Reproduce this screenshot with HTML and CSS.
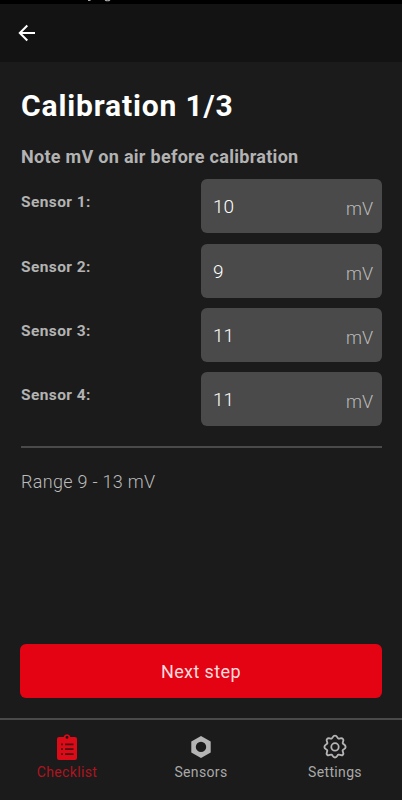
FILE: index.html
```html
<!DOCTYPE html>
<html lang="en">
<head>
<meta charset="utf-8">
<title>Calibration</title>
<link rel="stylesheet" href="styles.css">
</head>
<body>
<div class="screen">
  <div class="statusbar"><svg width="402" height="4" viewBox="0 0 402 4" fill="none" stroke="#a8a8a8" stroke-width="1.2"><path d="M88 .3h2.500M105 .2q3 1.200 5-.2"/></svg></div>
  <header class="appbar">
    <svg class="back" width="18" height="18" viewBox="0 0 18 18" fill="none" stroke="#fff" stroke-width="2"><path d="M17 9H2.200M9.300 1.500 1.800 9l7.500 7.500"/></svg>
  </header>
  <main class="content">
    <h1 class="title">Calibration 1/3</h1>
    <h2 class="subtitle">Note mV on air before calibration</h2>
    <div class="sensors">
      <div class="row"><span class="label">Sensor 1:</span><div class="field"><span class="value">10</span><span class="unit">mV</span></div></div>
      <div class="row"><span class="label">Sensor 2:</span><div class="field"><span class="value">9</span><span class="unit">mV</span></div></div>
      <div class="row"><span class="label">Sensor 3:</span><div class="field"><span class="value">11</span><span class="unit">mV</span></div></div>
      <div class="row"><span class="label">Sensor 4:</span><div class="field"><span class="value">11</span><span class="unit">mV</span></div></div>
    </div>
    <hr class="divider">
    <p class="range">Range 9 - 13 mV</p>
    <button class="next"><span>Next step</span></button>
  </main>
  <nav class="tabs">
    <a class="tab active">
      <svg width="26" height="28" viewBox="0 0 26 28"><path fill="#dc0b17" fill-rule="evenodd" d="M5 4h4.600a3.500 3.500 0 0 1 6.800 0H21a2 2 0 0 1 2 2v19a2 2 0 0 1-2 2H5a2 2 0 0 1-2-2V6a2 2 0 0 1 2-2Zm8-1.200a1.500 1.500 0 1 0 0 3 1.500 1.500 0 0 0 0-3Z"/><path stroke="#4a1114" stroke-width="1.700" d="M7 11.300h2M11 11.300h8.500M7 16.200h2M11 16.200h8.500M7 21.100h2M11 21.100h8.500"/></svg>
      <span>Checklist</span>
    </a>
    <a class="tab">
      <svg width="26" height="28" viewBox="0 0 26 28"><path fill="#b4b4b4" fill-rule="evenodd" d="m13 3 9.700 5.400v11L13 24.900l-9.700-5.500v-11Zm0 5.700a5.200 5.200 0 1 0 0 10.400 5.200 5.200 0 0 0 0-10.400Z"/></svg>
      <span>Sensors</span>
    </a>
    <a class="tab">
      <svg width="26" height="28" viewBox="0 0 26 28" fill="none" stroke="#b4b4b4" stroke-width="1.800" stroke-linejoin="round"><path transform="translate(-.65 -.7) scale(1.05)" d="M13 3.200c2.300 0 2 2.300 3.300 2.800s2.600-1.400 4.200.2-.6 3-.1 4.300 2.700 1 2.700 3.400-2.300 2-2.800 3.300 1.800 2.600.2 4.200-3-.6-4.300-.1-.9 2.700-3.200 2.700-2-2.200-3.300-2.700-2.600 1.700-4.200.1.600-2.900.1-4.200-2.700-1-2.700-3.300 2.300-2.100 2.800-3.400-1.800-2.700-.2-4.300 2.900.3 4.200-.2S10.700 3.200 13 3.200Z"/><circle cx="13" cy="13.900" r="3.700"/></svg>
      <span>Settings</span>
    </a>
  </nav>
</div>
</body>
</html>
```
FILE: styles.css
```css
* { box-sizing: border-box; }
body { margin: 0; background: #1b1b1b; font-family: Roboto, "Liberation Sans", sans-serif; color: #b3b3b3; }
.screen { width: 402px; height: 800px; display: flex; flex-direction: column; overflow: hidden; background: #1b1b1b; }
.statusbar { height: 4px; background: #000; flex: none; }
.statusbar svg { display: block; }
.appbar { height: 58px; flex: none; background: #131313; display: flex; align-items: center; padding-left: 18px; }
.content { height: 656px; flex: none; padding: 24px 20px 0 21px; display: flex; flex-direction: column; }
.title { margin: 0; font-size: 30px; line-height: 40px; font-weight: 700; letter-spacing: .85px; color: #fff; white-space: nowrap; }
.subtitle { margin: 19px 0 0; font-size: 18px; line-height: 24px; font-weight: 700; letter-spacing: .29px; white-space: nowrap; }
.sensors { display: flex; flex-direction: column; gap: 10.200px; margin-top: 10.400px; }
.row { display: flex; justify-content: space-between; height: 54px; }
.label { font-size: 15.500px; line-height: 20px; font-weight: 700; letter-spacing: .4px; padding-top: 13px; }
.field { width: 181px; height: 54px; border-radius: 6px; background: #4a4a4a; display: flex; justify-content: space-between; padding: 0 9px 0 12px; }
.value { font-size: 19px; line-height: 56px; font-weight: 300; color: #fff; }
.unit { font-size: 18px; line-height: 60px; font-weight: 300; color: #bcbcbc; }
.divider { width: 361px; height: 2px; border: 0; margin: 20px 0 0; background: #4a4a4a; flex: none; }
.range { margin: 22px 0 0; font-size: 18px; line-height: 24px; font-weight: 300; letter-spacing: .3px; color: #bcbcbc; }
.next { display: block; margin: 150px 0 0 -1px; width: 362px; height: 54px; flex: none; border: 0; padding: 2px 0 0; border-radius: 6px; background: #e30312; color: #fbdcde; font: 400 18px/24px Roboto, sans-serif; letter-spacing: .4px; }
.tabs { height: 82px; flex: none; border-top: 2px solid #4a4a4a; display: grid; grid-template-columns: repeat(3, 1fr); }
.tab { display: flex; flex-direction: column; align-items: center; padding-top: 13px; font-size: 14px; line-height: 18px; letter-spacing: .35px; color: #a9a9a9; }
.tab svg { display: block; }
.tab span { margin-top: 2px; }
.active { color: #b1141f; }
```
